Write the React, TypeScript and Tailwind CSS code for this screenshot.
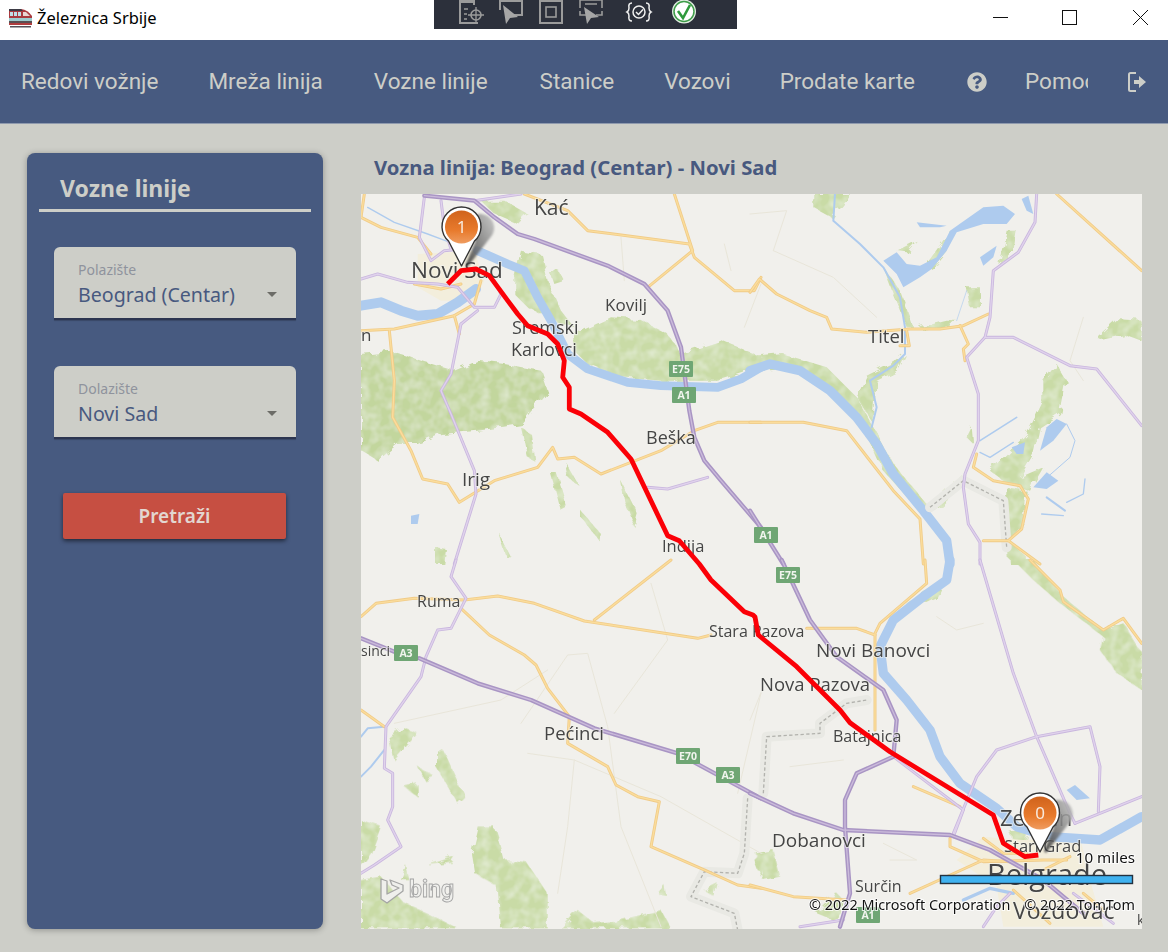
import React from "react";
import { FaQuestionCircle } from "react-icons/fa";

type Layer = {
  t: string;
  forest?: string[];
  green: string[];
  city?: string[];
  water: [string, number][];
  lakes?: string[];
  faint?: string[];
  yellow: string[];
  lilac: string[];
  hw: string[];
  dash?: string[];
};

const layers: Layer[] = [
  {
    t: "translate(361 194) scale(.33333)",
    forest: [
      "0,480 90,470 180,500 280,530 350,500 430,510 540,530 560,590 520,640 480,690 350,710 240,720 170,750 110,750 50,800 0,770",
    ],
    green: [
      "640,420 750,370 830,375 920,420 960,480 1080,440 1200,490 1200,520 1070,560 900,560 780,550 680,510 640,470",
      "460,250 480,170 540,180 560,260 600,350 640,400 580,380 500,340 460,300",
      "360,20 430,20 500,60 470,90 400,60",
      "570,240 590,225 610,260 580,270",
      "480,700 510,720 520,800 500,790",
      "570,840 590,840 620,940 600,950",
      "610,800 650,870 620,850",
      "780,860 830,960 820,1000 790,920",
      "660,950 720,1020 715,1040 660,970",
      "410,1010 450,1090 435,1090",
      "225,1060 255,1065 250,1110 225,1110",
    ],
    city: ["170,180 340,170 370,260 340,320 240,320 170,280"],
    water: [
      ["0,335 60,325 120,350 170,365 230,360 290,325 345,285", 30],
      ["350,170 440,210 490,230 530,310 570,380 620,480 680,525 800,565 900,575 1070,580 1140,555 1200,520", 26],
      ["20,40 100,85 200,120 280,150", 4],
    ],
    lakes: ["150,965 175,960 170,990 150,990"],
    faint: ["780,130 790,260", "1090,150 1110,230", "1200,270 1150,400"],
    yellow: [
      "10,0 0,70 60,100 170,130 210,180",
      "85,410 100,560 95,670 150,770 185,855 260,870 295,925 400,860 530,820 575,760 590,795 640,790 720,840 900,770 1000,710 1070,685 1200,685",
      "0,410 100,405 280,365 340,330 360,260",
      "490,0 620,50 680,110 985,150 1000,190 1120,290 1180,290 1200,250",
      "940,0 995,170 860,280",
      "280,365 295,420",
      "160,270 240,285 300,270",
    ],
    lilac: [
      "0,255 50,240 140,265 230,270 290,280 340,340 400,340 420,300 400,260",
      "300,390 270,540 240,590 270,660 340,830 345,900 280,1110",
      "190,10 175,130 210,200 250,170 300,165",
      "240,20 250,100 270,165",
      "860,880 920,885 1040,850",
      "340,20 480,0",
      "300,390 350,350",
    ],
    hw: ["190,5 340,20 400,70 470,120 520,135 740,215 850,270 920,350 960,460 985,650 1000,730 1030,800 1080,860 1200,1000"],
  },
  {
    t: "translate(750 194) scale(.33333)",
    green: [
      "190,0 190,40 245,70 300,0",
      "0,490 100,480 230,520 320,610 370,700 430,810 530,930 540,940 640,840 640,870 540,960 490,930 400,830 340,700 240,590 130,520 0,530",
      "320,610 350,545 440,500 465,480 440,530 380,560 370,690",
      "400,220 450,290 490,400 470,400 430,300",
      "510,400 590,380 620,380 600,400 520,410",
      "530,210 600,110 590,170 545,225",
      "440,170 500,140 470,175",
      "880,560 920,510 950,560 930,660 870,700 850,780 810,850 880,820 840,890 760,860 720,830 830,720 880,620",
      "1040,430 1100,375 1175,380 1175,440 1120,420 1050,435",
      "650,280 690,280 690,340 660,340",
      "650,730 665,700 670,750",
      "770,880 830,890 820,990 775,1040 765,960",
      "775,1040 830,1090 830,1110 780,1110",
      "770,110 800,110 790,170 745,210",
    ],
    water: [
      ["0,530 60,510 150,530 240,590 320,670 380,750 430,840 520,950 590,1040 600,1110", 28],
      ["255,0 250,80 330,150 400,220 450,310 465,400 465,480 430,515 360,560 380,640 365,700", 6],
      ["690,740 800,670", 5],
      ["690,775 720,790 790,745", 4],
      ["890,910 945,950", 6],
      ["875,960 940,965", 4],
      ["950,925 1000,900 1005,855", 4],
      ["950,690 975,740 960,790 880,860", 3],
      ["620,380 650,290", 2],
    ],
    lakes: [
      "400,200 440,175 470,210 510,215 560,190 600,110 700,40 760,35 795,60 770,90 700,90 620,115 590,170 545,225 510,250 460,280 440,240",
      "500,85 590,95 570,100 510,100",
      "690,190 740,155 730,190 700,215",
      "815,15 835,5 850,60 830,50",
      "870,770 890,700 920,675 950,690 910,740",
      "850,880 890,835 925,860 890,885",
      "785,760 825,745 820,780 800,780",
    ],
    faint: ["70,170 250,250 380,370", "0,60 110,50 70,170", "1000,370 960,500 1000,560"],
    yellow: [
      "920,0 1175,230",
      "0,295 28,255 80,300 180,350 230,370 245,405 350,415 480,405 570,405 640,395 715,360",
      "630,395 655,450 640,465 645,500",
      "0,685 160,685 290,710 430,890 510,975 520,1110",
      "680,780 670,820 730,860 810,875 835,915 815,1005 775,1040 700,1040",
      "775,1040 870,1110",
      "470,410 478,455 450,455",
    ],
    lilac: [
      "860,0 855,85 805,175 730,230 720,370 705,430 650,490 685,600 685,740 645,840 640,880 655,990 690,1045 690,1110",
      "705,430 790,430 960,515 1040,525 1175,695",
    ],
    hw: ["0,950 100,1110"],
    dash: ["540,940 640,860 760,920 770,1060"],
  },
  {
    t: "translate(361 560) scale(.33333)",
    green: [
      "225,570 250,575 310,710 290,730 225,620",
      "85,530 130,505 170,520 100,600",
      "130,680 170,670 170,710",
      "170,620 220,650 190,660",
      "0,780 60,800 30,880 0,920",
      "0,960 60,950 130,1030 200,1060 290,1105 0,1105",
      "330,880 350,800 400,800 420,860 430,900 500,910 560,1000 560,1105 420,1105 410,980 340,940",
      "600,1105 650,1050 700,1090 780,1080 900,1050 930,1105",
      "200,915 280,890 270,905",
      "120,960 135,915 145,960",
      "890,1000 910,975 915,1005",
      "1030,990 1070,970 1060,1010",
      "1180,900 1200,880 1200,950",
    ],
    water: [["70,500 20,505 0,530", 6], ["70,570 30,620 0,650", 6]],
    faint: [
      "480,490 620,285 680,280 740,500 780,800 900,1100",
      "100,490 420,420 560,330",
      "500,580 640,600 900,710 1200,880",
      "870,70 920,240 760,460",
      "640,600 620,800 590,1000",
      "1200,400 1130,700",
    ],
    yellow: [
      "0,170 45,130 160,115 310,120 410,108 520,130 670,183 1010,235 1050,225",
      "700,180 930,0",
      "300,145 385,225 490,285 525,315 560,385 625,470 620,550 740,620 765,675 830,710 895,725 870,860 1030,930 1130,975 1200,985",
      "0,450 70,500",
    ],
    lilac: [
      "285,0 270,50 315,115 270,205 230,210 195,290 180,350 75,500 70,625 95,640 95,740 80,780 120,860 40,915 0,940",
    ],
    hw: ["0,235 100,275", "175,295 350,370 510,420 700,505 950,580 1200,715"],
    dash: ["1160,715 1150,880 1130,940 1030,935 990,1010 1120,1060 1130,1110"],
  },
  {
    t: "translate(750 560) scale(.33333)",
    green: [
      "790,0 850,60 930,130 1060,230 1050,270 1100,340 1175,390 1175,280 1120,190 1060,210 940,110 850,0",
      "20,880 70,870 90,950 40,960",
      "470,130 540,85 590,60 560,110 480,150",
      "200,1060 260,1000 290,1030 250,1080",
      "780,810 840,810 830,860 790,850",
    ],
    city: ["700,830 820,840 990,830 1020,960 1060,1100 760,1100 740,980 620,900"],
    water: [
      ["600,0 590,60 520,110 430,180 390,260 400,340 470,420 540,510 570,590 630,670 740,745 800,800 900,830 1050,840 1175,770", 28],
      ["640,1020 720,985 790,1000", 10],
    ],
    lakes: ["950,690 975,675 1020,715 980,720"],
    faint: ["560,170 620,210 700,190", "0,480 40,380", "120,620 280,600", "400,850 500,900 420,900"],
    yellow: [
      "525,0 530,70 390,190 375,220 375,510",
      "170,205 320,205 375,225",
      "0,975 130,1010 290,1020",
      "480,1000 700,900 780,905",
      "840,0 930,90 940,125 1060,210 1120,175 1175,250",
      "600,835 600,860 700,905 880,900 950,900",
      "700,835 760,880 830,880",
      "490,680 630,740",
      "790,990 900,1090",
      "1000,1000 1060,1050",
      "880,930 960,890",
    ],
    lilac: [
      "690,0 790,340 860,530 960,760 975,790",
      "610,820 680,650 740,570 860,530 1020,500 1050,620 1045,755",
      "975,790 1175,710",
      "430,590 640,750 610,830",
      "150,1100 280,1080",
      "970,1000 1090,1090",
      "700,1100 740,1040 780,1000",
    ],
    hw: [
      "95,0 180,180 260,290 400,390 440,480 430,590 320,640 285,720 285,800 300,1000 270,1100",
      "0,700 130,760 280,810 600,825 720,870 880,960 1000,1060",
    ],
    dash: ["40,700 50,530 210,520 210,490 290,430 350,420"],
  },
];

const labels: [string, number, number, number][] = [
  ["Kać", 534, 215, 21],
  ["Novi Sad", 411, 278, 22.5],
  ["Kovilj", 605, 311, 17],
  ["Sremski", 512, 334, 18],
  ["Karlovci", 511, 356, 18],
  ["Titel", 868, 343, 18.5],
  ["Beška", 646, 444, 18],
  ["Irig", 462, 486, 19],
  ["Indija", 662, 552, 16.5],
  ["Ruma", 417, 607, 16],
  ["n", 361, 341, 17],
  ["sinci", 361, 656, 14],
  ["Stara Pazova", 709, 637, 16],
  ["Pećinci", 544, 740, 18.5],
  ["Novi Banovci", 816, 657, 19],
  ["Nova Pazova", 760, 691, 18.5],
  ["Batajnica", 833, 742, 16],
  ["Dobanovci", 772, 847, 19],
  ["Surčin", 855, 892, 16],
  ["Zemun", 1000, 826, 22],
  ["Stari Grad", 1004, 852, 16.5],
  ["Belgrade", 987, 885, 29],
  ["Vozdovac", 1013, 919, 23],
  ["k", 1137, 925, 14],
];

const shields: [string, number, number][] = [
  ["E75", 681, 369],
  ["A1", 684, 395],
  ["A1", 766, 535],
  ["E75", 788, 575],
  ["A3", 406, 653],
  ["E70", 688, 756],
  ["A3", 728, 775],
  ["A1", 868, 915],
];

const route =
  "447.7,284 461,270.7 476,269 489.3,275.7 507.7,300.7 517.7,314 527.7,325.7 547.7,334 557.7,344 564.3,360.7 562.7,377.3 569.3,387.3 569.3,409 581,414 607.7,432.3 631,459 667.7,535.7 679.3,540.7 699.3,564 711,580 744.3,611.7 753,615 755,617 758.3,635 796.7,666.7 840,710 850,722.7 890,751.7 993.3,815 1003.3,843.3 1025,856.7 1038.3,855";

function Pin({ x, y, n, id }: { x: number; y: number; n: string; id: string }) {
  return (
    <g transform={`translate(${x} ${y})`}>
      <g className="blur-[1px]">
        <path d="M4,38 L14,14 A14,14 0 1 1 30,9 L6,40 Z" fill={`url(#shade${id})`} opacity="0.85" />
      </g>
      <path
        d="M0,39 L-13,14 A19.5,19.5 0 1 1 13,14 Z"
        fill="#ffffff"
        stroke="#333333"
        strokeWidth="1.4"
        strokeLinejoin="round"
      />
      <circle r="16.5" fill={`url(#orange${id})`} />
      <text
        y="6"
        textAnchor="middle"
        fontSize="17"
        fill="#f8eadd"
        fontFamily="'Noto Sans', sans-serif"
      >
        {n}
      </text>
      <defs>
        <linearGradient id={`shade${id}`} x1="0" y1="1" x2="1" y2="0">
          <stop offset="0" stopColor="#333333" />
          <stop offset="1" stopColor="#c4c4c4" />
        </linearGradient>
        <linearGradient id={`orange${id}`} x1="0" y1="0" x2="0" y2="1">
          <stop offset="0" stopColor="#d0631c" />
          <stop offset="0.6" stopColor="#e87a2c" />
          <stop offset="1" stopColor="#ef9c60" />
        </linearGradient>
      </defs>
    </g>
  );
}

function MapCanvas() {
  return (
    <svg viewBox="361 194 781 735" className="block w-[781px] h-[735px] bg-[#f1f0ec]">
      <defs>
        <filter id="rough" x="-5%" y="-5%" width="110%" height="110%">
          <feTurbulence type="fractalNoise" baseFrequency="0.1" numOctaves="2" seed="4" result="n" />
          <feDisplacementMap in="SourceGraphic" in2="n" scale="9" result="d" />
          <feColorMatrix
            in="n"
            type="matrix"
            values="0 0 0 0 1  0 0 0 0 1  0 0 0 0 1  0.7 0 0 0 -0.25"
            result="w"
          />
          <feComposite in="w" in2="d" operator="in" result="m" />
          <feMerge>
            <feMergeNode in="d" />
            <feMergeNode in="m" />
          </feMerge>
        </filter>
      </defs>
      <g className="blur-[0.5px]">
        <g filter="url(#rough)">
          {layers.map((l, i) => (
            <g key={i} transform={l.t}>
              {l.forest?.map((p, k) => <polygon key={k} points={p} fill="#c2d69d" />)}
              {l.green.map((p, k) => <polygon key={k} points={p} fill="#c9dba6" />)}
            </g>
          ))}
        </g>
        {layers.map((l, i) => (
          <g key={i} transform={l.t} fill="none" strokeLinejoin="round" strokeLinecap="round">
            {l.city?.map((p, k) => <polygon key={k} points={p} fill="#f3eedc" />)}
            {l.faint?.map((p, k) => <polyline key={k} points={p} stroke="#e8e5d9" strokeWidth="3" />)}
            {l.water.map(([p, w], k) => <polyline key={k} points={p} stroke="#aecbee" strokeWidth={w} />)}
            {l.lakes?.map((p, k) => <polygon key={k} points={p} fill="#aecbee" />)}
            {l.dash?.map((p, k) => <polyline key={k} points={p} stroke="#e9e9e4" strokeWidth="30" />)}
            {l.dash?.map((p, k) => (
              <polyline key={k} points={p} stroke="#b2b2ad" strokeWidth="4" strokeDasharray="10 7" strokeLinecap="butt" />
            ))}
            {l.yellow.map((p, k) => <polyline key={k} points={p} stroke="#f0cb88" strokeWidth="9" />)}
            {l.yellow.map((p, k) => <polyline key={k} points={p} stroke="#fbdd9c" strokeWidth="4" />)}
            {l.lilac.map((p, k) => <polyline key={k} points={p} stroke="#c9b6de" strokeWidth="9" />)}
            {l.lilac.map((p, k) => <polyline key={k} points={p} stroke="#e0d3ec" strokeWidth="4" />)}
            {l.hw.map((p, k) => <polyline key={k} points={p} stroke="#a995c4" strokeWidth="13" />)}
            {l.hw.map((p, k) => <polyline key={k} points={p} stroke="#cbbbdb" strokeWidth="4" />)}
          </g>
        ))}
      </g>
      <g fontFamily="'Open Sans', sans-serif" fill="#454545" stroke="#f4f3ef" strokeOpacity="0.6" strokeWidth="2" style={{ paintOrder: "stroke" }}>
        {labels.map(([s, x, y, f]) => (
          <text key={s} x={x} y={y} fontSize={f}>
            {s}
          </text>
        ))}
      </g>
      {shields.map(([s, x, y], i) => (
        <g key={i}>
          <rect x={x - 12} y={y - 8} width="24" height="16" fill="#6fa674" rx="1" />
          <text x={x} y={y + 4} textAnchor="middle" fontSize="10.5" fontWeight="700" fill="#f1f5ee" fontFamily="'Open Sans', sans-serif">
            {s}
          </text>
        </g>
      ))}
      <polyline points={route} fill="none" stroke="#fb0007" strokeWidth="4.8" strokeLinejoin="round" strokeLinecap="butt" />
      <Pin x={461.5} y={227} n="1" id="a" />
      <Pin x={1040} y={813} n="0" id="b" />
      <path
        d="M381,879 L387,881 L387,894 L399,888 L392,885 L390,880 L403,885 L403,891 L387,903 L381,899 Z"
        fill="#efefec"
        stroke="#a5a5a5"
        strokeWidth="1.3"
        strokeLinejoin="round"
      />
      <text x="409" y="897" fontSize="23" fontWeight="700" fontFamily="'Roboto', sans-serif" fill="#efefec" stroke="#a5a5a5" strokeWidth="0.9">
        bing
      </text>
      <rect x="940.5" y="875.5" width="192" height="8" fill="#40b2f0" stroke="#23313f" strokeWidth="1.4" />
      <g fontFamily="'Noto Sans', sans-serif" fill="#111111" stroke="#ffffff" strokeOpacity="0.8" strokeWidth="2" style={{ paintOrder: "stroke" }}>
        <text x="1135" y="863" textAnchor="end" fontSize="15.2">
          10 miles
        </text>
        <text x="809" y="910" fontSize="14.4">
          © 2022 Microsoft Corporation
        </text>
        <text x="1135" y="910" textAnchor="end" fontSize="14.4">
          © 2022 TomTom
        </text>
      </g>
    </svg>
  );
}

function TrainIcon() {
  return (
    <svg viewBox="0 0 25 20" className="w-[25px] h-[20px]">
      <path d="M1,1 H13 Q20,2 24,8 V13 H1 Z" fill="#a93a3f" />
      <path d="M1,1 H13 L15,3 H1 Z" fill="#3d3b45" />
      <rect x="2" y="4" width="3" height="4" fill="#bfe0e8" />
      <rect x="6" y="4" width="3" height="4" fill="#bfe0e8" />
      <rect x="10" y="4" width="3" height="4" fill="#bfe0e8" />
      <path d="M15,4 H18 L22,8 H15 Z" fill="#e9d6d4" />
      <rect x="1" y="10" width="23" height="3" fill="#9ccdd0" />
      <rect x="1" y="13" width="23" height="2" fill="#5b4e52" />
      <rect x="1" y="15" width="23" height="2" fill="#b03d3f" />
      <rect x="2" y="18" width="21" height="1.5" fill="#555058" />
    </svg>
  );
}

function Toolbar() {
  const s = "#9b9b9b";
  return (
    <div className="absolute left-[434px] top-0 w-[303px] h-[29px] bg-[#2c303b] overflow-hidden">
      <svg viewBox="0 0 303 29" className="w-[303px] h-[29px]" fill="none">
        <path d="M26,0 V23 H44 M40,0 V5" stroke={s} strokeWidth="2" />
        <rect x="26" y="0" width="15" height="3" fill={s} />
        <path d="M30,9 H34 M30,14 H33 M30,19 H33" stroke={s} strokeWidth="1.5" />
        <circle cx="42" cy="15" r="5" stroke={s} strokeWidth="1.6" />
        <path d="M42,7 V23 M34,15 H50" stroke={s} strokeWidth="1.3" />
        <path d="M66,10 V1 H88 V15 H80" stroke={s} strokeWidth="2" />
        <path d="M69,5 L72,24 L76,18 L84,17 Z" fill="#a6a6a6" />
        <rect x="106" y="1" width="22" height="22" stroke={s} strokeWidth="2" />
        <rect x="112" y="7" width="10" height="10" stroke={s} strokeWidth="1.6" />
        <path d="M146,8 V0 H168 V8 M146,11 V15 H152 M168,11 V15 H162 M151,4 H163" stroke={s} strokeWidth="1.6" />
        <path d="M150,7 L153,24 L157,18 L165,17 Z" fill="#a6a6a6" />
        <circle cx="205" cy="12" r="6" stroke="#f0f0f0" strokeWidth="1.5" />
        <path d="M202,12 L204.5,14.5 L209,9.5" stroke="#f0f0f0" strokeWidth="1.5" />
        <path
          d="M198,3 Q194,3 195,8 Q195,11 193,12 Q195,13 195,16 Q194,21 198,21 M212,3 Q216,3 215,8 Q215,11 217,12 Q215,13 215,16 Q216,21 212,21"
          stroke="#f0f0f0"
          strokeWidth="1.5"
        />
        <circle cx="250" cy="11.5" r="12" fill="#e3efe2" />
        <circle cx="250" cy="11.5" r="10" fill="#ffffff" stroke="#3f9d4a" strokeWidth="1.5" />
        <path d="M244,11 L249,18 L256,5" stroke="#2f9a3c" strokeWidth="2.6" />
      </svg>
    </div>
  );
}

function Field({ label, value }: { label: string; value: string }) {
  return (
    <div className="relative w-[242px] h-[73px] bg-[#cdcec8] rounded-t-[6px] border-b-[2px] border-[#2c3550] pl-[24px] pt-[13px] shadow-[0_1px_1px_rgba(0,0,0,0.2)]">
      <div className="text-[14px] leading-[19px] mb-[2px] text-[#8f939d] font-['Noto_Sans',sans-serif]">{label}</div>
      <div className="text-[19.6px] leading-[27px] text-[#48597f] font-['Noto_Sans',sans-serif]">{value}</div>
      <div className="absolute right-[19px] top-[45px] w-0 h-0 border-l-[5px] border-r-[5px] border-t-[5px] border-l-transparent border-r-transparent border-t-[#6c6c67]" />
    </div>
  );
}

export default function App() {
  const nav = [
    { n: "Redovi vožnje", c: "" },
    { n: "Mreža linija", c: "" },
    { n: "Vozne linije", c: "ml-[1px]" },
    { n: "Stanice", c: "ml-[2px]" },
    { n: "Vozovi", c: "" },
    { n: "Prodate karte", c: "-ml-[1px]" },
  ];
  return (
    <div className="relative w-[1168px] h-[952px] overflow-hidden bg-[#cdcec8] flex flex-col font-['Roboto',sans-serif]">
      <header className="h-10 bg-white flex items-center shrink-0 pl-2 pb-1">
        <TrainIcon />
        <span className="ml-1 text-[16.5px] text-black font-['Noto_Sans',sans-serif]">Železnica Srbije</span>
        <div className="ml-auto self-start">
          <svg viewBox="0 0 175 40" className="block w-[175px] h-10" fill="none" stroke="#111" strokeWidth="1">
            <path d="M0,17.5 H15" />
            <rect x="69.5" y="10.5" width="14" height="14" />
            <path d="M140,10 L155,25 M155,10 L140,25" />
          </svg>
        </div>
      </header>
      <Toolbar />
      <nav className="h-[84px] shrink-0 bg-[#475a80] border-b border-[#8f9aae] flex items-center pl-[21px] text-[22.5px] text-[#cdcec8]">
        <div className="flex gap-[50px] whitespace-nowrap">
          {nav.map((item) => (
            <span key={item.n} className={item.c}>
              {item.n}
            </span>
          ))}
        </div>
        <FaQuestionCircle className="ml-[52px] w-5 h-5 text-[#cdcec8]" />
        <div className="ml-[38px] w-[63px] overflow-hidden whitespace-nowrap">Pomoć</div>
        <svg viewBox="0 0 20 22" className="ml-[39px] w-5 h-[22px]" fill="none">
          <path d="M9,2 H3.5 Q2,2 2,3.5 V18.5 Q2,20 3.5,20 H9" stroke="#cdcec8" strokeWidth="2" />
          <path d="M7,9 H12 V5 L19,11 L12,17 V13 H7 Z" fill="#cdcec8" />
        </svg>
      </nav>
      <main className="flex-1 flex pl-[27px] pt-[29px] gap-[38px]">
        <aside className="w-[296px] h-[776px] bg-[#475a80] rounded-[8px] shadow-[0_1px_6px_rgba(0,0,0,0.3)] px-3 pt-[19px]">
          <div className="h-[40px] border-b-[3px] border-[#cdcec8] pl-[21px] text-[23px] leading-[33px] font-bold text-[#cdcec8] font-['Noto_Sans',sans-serif]">
            Vozne linije
          </div>
          <div className="flex flex-col gap-[46px] pl-[15px] pt-[35px]">
            <Field label="Polazište" value="Beograd (Centar)" />
            <Field label="Dolazište" value="Novi Sad" />
          </div>
          <button className="mt-[54px] ml-[24px] w-[223px] h-[46px] bg-[#c64f42] rounded-[2px] text-[19px] font-semibold text-[#e3d6d0] shadow-[0_2px_4px_rgba(0,0,0,0.55)] font-['Noto_Sans',sans-serif]">
            Pretraži
          </button>
        </aside>
        <section className="w-[781px]">
          <h1 className="h-[41px] pl-[13px] text-[20.3px] leading-[28px] font-bold text-[#48597f] font-['Noto_Sans',sans-serif]">
            Vozna linija: Beograd (Centar) - Novi Sad
          </h1>
          <MapCanvas />
        </section>
      </main>
    </div>
  );
}
